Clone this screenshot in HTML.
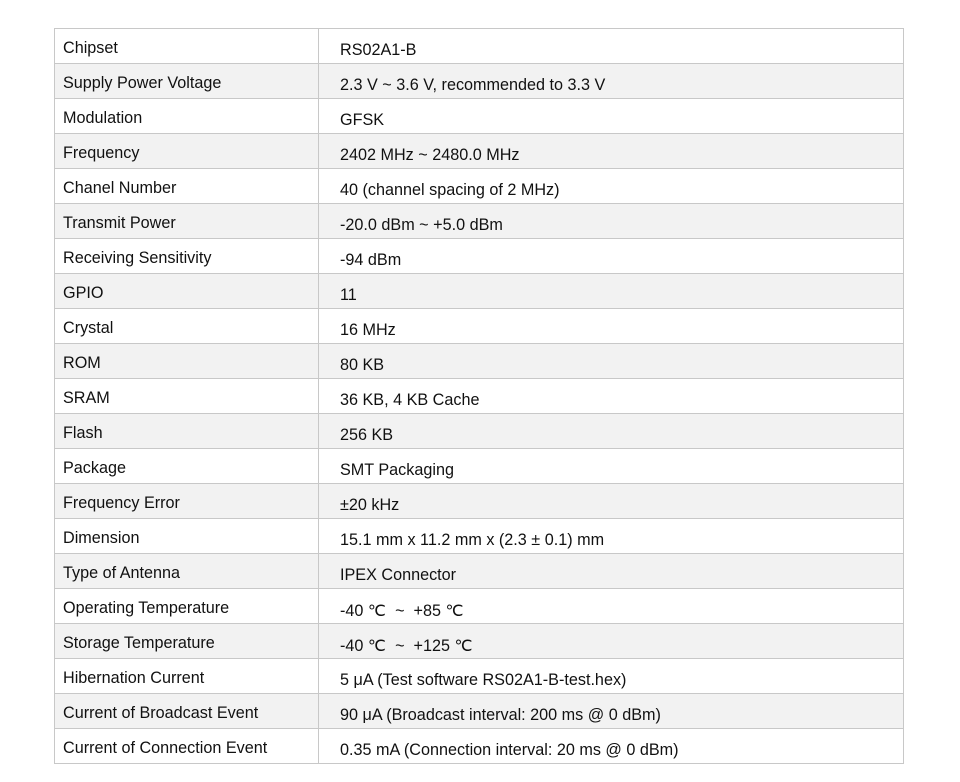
<!DOCTYPE html>
<html><head><meta charset="utf-8"><style>
body{margin:0;width:960px;height:782px;background:#fff;font-family:"Liberation Sans",Arial,sans-serif;color:#111;position:relative;overflow:hidden}
.t{position:absolute;left:54px;top:28px;width:850px;border:1px solid #c8c8c8;box-sizing:border-box}
.r{height:35px;position:relative;border-top:1px solid #c8c8c8;box-sizing:border-box;font-size:16.2px}
.r:first-child{border-top:none;height:34px}
.r:nth-child(even){background:#f2f2f2}
.a{position:absolute;left:8px;top:10px}
.b{position:absolute;left:285px;top:12px}
.d{position:absolute;left:263px;top:0;bottom:0;border-left:1px solid #c8c8c8}
</style></head><body>
<div class="t">
<div class="r"><span class="a">Chipset</span><span class="d"></span><span class="b">RS02A1-B</span></div>
<div class="r"><span class="a">Supply Power Voltage</span><span class="d"></span><span class="b">2.3 V ~ 3.6 V, recommended to 3.3 V</span></div>
<div class="r"><span class="a">Modulation</span><span class="d"></span><span class="b">GFSK</span></div>
<div class="r"><span class="a">Frequency</span><span class="d"></span><span class="b">2402 MHz ~ 2480.0 MHz</span></div>
<div class="r"><span class="a">Chanel Number</span><span class="d"></span><span class="b">40 (channel spacing of 2 MHz)</span></div>
<div class="r"><span class="a">Transmit Power</span><span class="d"></span><span class="b">-20.0 dBm ~ +5.0 dBm</span></div>
<div class="r"><span class="a">Receiving Sensitivity</span><span class="d"></span><span class="b">-94 dBm</span></div>
<div class="r"><span class="a">GPIO</span><span class="d"></span><span class="b">11</span></div>
<div class="r"><span class="a">Crystal</span><span class="d"></span><span class="b">16 MHz</span></div>
<div class="r"><span class="a">ROM</span><span class="d"></span><span class="b">80 KB</span></div>
<div class="r"><span class="a">SRAM</span><span class="d"></span><span class="b">36 KB, 4 KB Cache</span></div>
<div class="r"><span class="a">Flash</span><span class="d"></span><span class="b">256 KB</span></div>
<div class="r"><span class="a">Package</span><span class="d"></span><span class="b">SMT Packaging</span></div>
<div class="r"><span class="a">Frequency Error</span><span class="d"></span><span class="b">±20 kHz</span></div>
<div class="r"><span class="a">Dimension</span><span class="d"></span><span class="b">15.1 mm x 11.2 mm x (2.3 ± 0.1) mm</span></div>
<div class="r"><span class="a">Type of Antenna</span><span class="d"></span><span class="b">IPEX Connector</span></div>
<div class="r"><span class="a">Operating Temperature</span><span class="d"></span><span class="b">-40 ℃ &nbsp;~ &nbsp;+85 ℃</span></div>
<div class="r"><span class="a">Storage Temperature</span><span class="d"></span><span class="b">-40 ℃ &nbsp;~ &nbsp;+125 ℃</span></div>
<div class="r"><span class="a">Hibernation Current</span><span class="d"></span><span class="b">5 μA (Test software RS02A1-B-test.hex)</span></div>
<div class="r"><span class="a">Current of Broadcast Event</span><span class="d"></span><span class="b">90 μA (Broadcast interval: 200 ms @ 0 dBm)</span></div>
<div class="r"><span class="a">Current of Connection Event</span><span class="d"></span><span class="b">0.35 mA (Connection interval: 20 ms @ 0 dBm)</span></div>
</div>
</body></html>
